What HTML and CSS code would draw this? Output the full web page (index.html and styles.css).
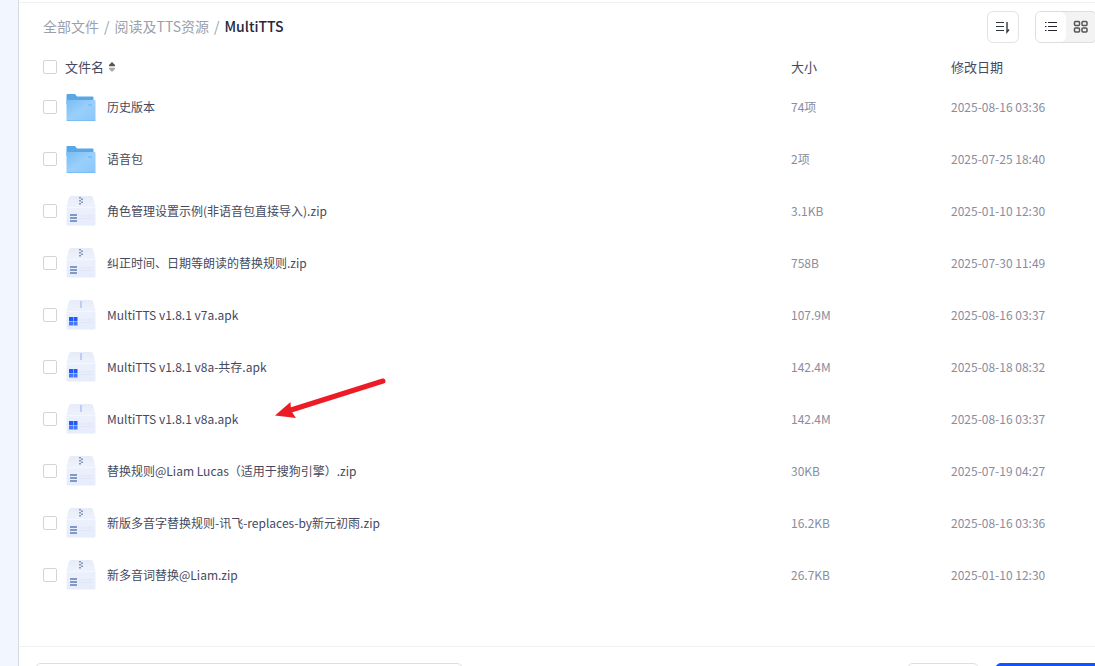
FILE: index.html
```html
<!DOCTYPE html>
<html lang="zh-CN">
<head>
    <meta charset="UTF-8">
    <meta name="viewport" content="width=device-width, initial-scale=1.0">
    <title>MultiTTS</title>
    <link rel="stylesheet" href="styles.css">
</head>
<body>
    <!-- Shared file icons -->
    <svg class="sprite" aria-hidden="true">
        <defs>
            <linearGradient id="folderFill" x1="0" y1="0" x2="1" y2="1">
                <stop offset="0" stop-color="#79bdf3"/>
                <stop offset="0.5" stop-color="#9acffb"/>
                <stop offset="1" stop-color="#8ac6fa"/>
            </linearGradient>
            <linearGradient id="boxFill" x1="0" y1="0" x2="0" y2="1">
                <stop offset="0" stop-color="#e7ebf7"/>
                <stop offset="0.3" stop-color="#edf1fb"/>
                <stop offset="1" stop-color="#e6ecfb"/>
            </linearGradient>
            <symbol id="folder" viewBox="0 0 30 30">
                <path d="M.5 3Q.5 2 1.500 2H9l2 2.500h15.500q1 0 1 1V12H.5z" fill="#5aa7e6"/>
                <path d="M1.500 8h27q1 0 1 1v19q0 1-1 1h-27q-1 0-1-1V9q0-1 1-1z" fill="url(#folderFill)"/>
                <path d="M.5 28h29q0 1-1 1h-27q-1 0-1-1z" fill="#79bdf3"/>
                <rect x="22" y="12" width="4" height="2" rx="1" fill="#7fbff3"/>
            </symbol>
            <symbol id="box" viewBox="0 0 30 30">
                <path d="M5 0h20q1.500 0 2 1.500L29.500 11v17q0 1.500-1.500 1.500H2Q.5 29.500.5 28V11L3 1.500Q3.500 0 5 0z" fill="url(#boxFill)"/>
                <path d="M.5 11.500h29" stroke="#f5f7fd"/>
                <path d="M13 20h14M13 22.500h14" stroke="#e0e6f5"/>
            </symbol>
            <symbol id="zip" viewBox="0 0 30 30">
                <use href="#box"/>
                <path d="M13 1h2v1.500h2V4h-2v1.500h2V7h-2v1.500h-2V7h2V5.500h-2V4h2V2.500h-2z" fill="#8795b8"/>
                <path d="M4 19h7M4 22h7M4 25h7" stroke="#8299c8" stroke-width="2"/>
            </symbol>
            <symbol id="apk" viewBox="0 0 30 30">
                <use href="#box"/>
                <path d="M14 1h2v7h-2z" fill="#b9cffb"/>
                <path d="M3 17h4v4H3zM7.500 17h4v4h-4z" fill="#1f59ff"/>
                <path d="M3 21.500h4v4H3zM7.500 21.500h4v4h-4z" fill="#4377ff"/>
            </symbol>
        </defs>
    </svg>

    <div class="app">
        <aside class="sidebar"></aside>
        <main class="panel">
            <header class="toolbar">
                <nav class="breadcrumb">
                    <a href="#">全部文件</a><span>/</span><a href="#">阅读及TTS资源</a><span>/</span><strong>MultiTTS</strong>
                </nav>
                <button type="button" class="tool-btn" aria-label="排序">
                    <svg width="16" height="16" viewBox="0 0 16 16" fill="none" stroke="#333740">
                        <path d="M1 3.500h8M1 7.500h8M1 11.500h8" stroke-width="1.200"/>
                        <path d="M12 3v10l2-2.500" stroke-width="1.400"/>
                    </svg>
                </button>
                <div class="view-switch">
                    <button type="button" class="active" aria-label="列表">
                        <svg width="16" height="16" viewBox="0 0 16 16" stroke="#25272e" stroke-width="1.200">
                            <path d="M2 3.500h1.500M5 3.500h9M2 7.500h1.500M5 7.500h9M2 11.500h1.500M5 11.500h9"/>
                        </svg>
                    </button>
                    <button type="button" aria-label="网格">
                        <svg width="16" height="16" viewBox="0 0 16 16" fill="none" stroke="#555" stroke-width="1.500">
                            <rect x="1.500" y="2.500" width="5" height="4" rx="1"/>
                            <rect x="9" y="2.500" width="5" height="4" rx="1"/>
                            <rect x="1.500" y="9" width="5" height="4" rx="1"/>
                            <rect x="9" y="9" width="5" height="4" rx="1"/>
                        </svg>
                    </button>
                </div>
            </header>

            <div class="list">
                <table class="files">
                    <thead>
                        <tr>
                            <th class="col-check"><input type="checkbox" aria-label="全选"></th>
                            <th>文件名<svg class="sort" width="8" height="10" viewBox="0 0 8 10"><path d="M4 0l3 3v1.200H1V3z" fill="#555"/><path d="M4 10L1 7V5.800h6V7z" fill="#aaa"/></svg></th>
                            <th class="col-size">大小</th>
                            <th class="col-date">修改日期</th>
                        </tr>
                    </thead>
                    <tbody>
                        <tr>
                            <td><input type="checkbox" id="f1"></td>
                            <td><label class="name" for="f1"><svg><use href="#folder"/></svg>历史版本</label></td>
                            <td>74项</td>
                            <td>2025-08-16 03:36</td>
                        </tr>
                        <tr>
                            <td><input type="checkbox" id="f2"></td>
                            <td><label class="name" for="f2"><svg><use href="#folder"/></svg>语音包</label></td>
                            <td>2项</td>
                            <td>2025-07-25 18:40</td>
                        </tr>
                        <tr>
                            <td><input type="checkbox" id="f3"></td>
                            <td><label class="name" for="f3"><svg><use href="#zip"/></svg>角色管理设置示例(非语音包直接导入).zip</label></td>
                            <td>3.1KB</td>
                            <td>2025-01-10 12:30</td>
                        </tr>
                        <tr>
                            <td><input type="checkbox" id="f4"></td>
                            <td><label class="name" for="f4"><svg><use href="#zip"/></svg>纠正时间、日期等朗读的替换规则.zip</label></td>
                            <td>758B</td>
                            <td>2025-07-30 11:49</td>
                        </tr>
                        <tr>
                            <td><input type="checkbox" id="f5"></td>
                            <td><label class="name" for="f5"><svg><use href="#apk"/></svg>MultiTTS v1.8.1 v7a.apk</label></td>
                            <td>107.9M</td>
                            <td>2025-08-16 03:37</td>
                        </tr>
                        <tr>
                            <td><input type="checkbox" id="f6"></td>
                            <td><label class="name" for="f6"><svg><use href="#apk"/></svg>MultiTTS v1.8.1 v8a-共存.apk</label></td>
                            <td>142.4M</td>
                            <td>2025-08-18 08:32</td>
                        </tr>
                        <tr>
                            <td><input type="checkbox" id="f7"></td>
                            <td><label class="name" for="f7"><svg><use href="#apk"/></svg>MultiTTS v1.8.1 v8a.apk</label></td>
                            <td>142.4M</td>
                            <td>2025-08-16 03:37</td>
                        </tr>
                        <tr>
                            <td><input type="checkbox" id="f8"></td>
                            <td><label class="name" for="f8"><svg><use href="#zip"/></svg>替换规则@Liam Lucas（适用于搜狗引擎）.zip</label></td>
                            <td>30KB</td>
                            <td>2025-07-19 04:27</td>
                        </tr>
                        <tr>
                            <td><input type="checkbox" id="f9"></td>
                            <td><label class="name" for="f9"><svg><use href="#zip"/></svg>新版多音字替换规则-讯飞-replaces-by新元初雨.zip</label></td>
                            <td>16.2KB</td>
                            <td>2025-08-16 03:36</td>
                        </tr>
                        <tr>
                            <td><input type="checkbox" id="f10"></td>
                            <td><label class="name" for="f10"><svg><use href="#zip"/></svg>新多音词替换@Liam.zip</label></td>
                            <td>26.7KB</td>
                            <td>2025-01-10 12:30</td>
                        </tr>
                    </tbody>
                </table>
                <svg class="pointer" width="112" height="42" viewBox="0 0 112 42">
                    <path d="M108 4L16 33" stroke="#ed1c24" stroke-width="5" stroke-linecap="round"/>
                    <path d="M0 38.500L15.500 25L16 33.500L21 41z" fill="#ed1c24"/>
                </svg>
            </div>

            <footer class="footer">
                <input type="text" class="path" aria-label="保存路径">
                <button type="button" class="cancel" aria-label="取消"></button>
                <button type="button" class="confirm" aria-label="确定"></button>
            </footer>
        </main>
    </div>
</body>
</html>
```

FILE: styles.css
```css
* {
    box-sizing: border-box;
}
body {
    margin: 0;
    font-family: "Noto Sans CJK SC", sans-serif;
    font-size: 12px;
    line-height: 20px;
    color: #454960;
    background-color: #fff;
    overflow: hidden;
}
button {
    padding: 0;
    cursor: pointer;
}
.sprite {
    position: absolute;
    width: 0;
    height: 0;
}
.app {
    display: flex;
    height: 100vh;
}
.sidebar {
    flex: none;
    width: 19px;
    background-color: #f1f6ff;
    border-right: 1px solid #d9dbe0;
}
.panel {
    display: flex;
    flex-direction: column;
    flex: 1;
    min-width: 0;
    padding-top: 2px;
}

/* Toolbar */
.toolbar {
    display: flex;
    align-items: center;
    padding: 8px 0 10px 24px;
    border-top: 1px solid #f1f1f3;
}
.breadcrumb {
    flex: 1;
    padding-bottom: 2px;
    font-size: 14px;
    color: #9c9fac;
}
.breadcrumb a {
    color: #9c9fac;
    text-decoration: none;
}
.breadcrumb span {
    margin: 0 5px;
}
.breadcrumb strong {
    font-weight: 500;
    color: #25283d;
}
.tool-btn {
    display: flex;
    align-items: center;
    justify-content: center;
    width: 32px;
    height: 32px;
    margin-right: 16px;
    border: 1px solid #e3e3e6;
    border-radius: 6px;
    background-color: #fff;
}
.view-switch {
    display: flex;
    height: 32px;
    margin-right: -2px;
    border: 1px solid #dedee1;
    border-radius: 6px;
    background-color: #f3f3f4;
    overflow: hidden;
}
.view-switch button {
    display: flex;
    align-items: center;
    justify-content: center;
    width: 30px;
    border: 0;
    background-color: transparent;
}
.view-switch .active {
    background-color: #fff;
    border-radius: 0 6px 6px 0;
}

/* File list */
.list {
    position: relative;
    flex: 1;
    padding-left: 24px;
}
.files {
    width: 100%;
    table-layout: fixed;
    border-collapse: collapse;
}
.files th {
    height: 28px;
    padding: 0;
    font-size: 13px;
    font-weight: 400;
    text-align: left;
}
.files td {
    height: 52px;
    padding: 0;
    color: #8a8d9e;
}
.files .col-check {
    width: 22px;
}
.files .col-size {
    width: 160px;
}
.files .col-date {
    width: 144px;
}
.files input {
    display: block;
    appearance: none;
    width: 14px;
    height: 14px;
    margin: 0;
    border: 1px solid #d3d4d8;
    border-radius: 2px;
    background-color: #fff;
}
.files input:checked {
    background-color: #1f59ff;
}
.sort {
    margin-left: 4px;
}
.name {
    display: flex;
    align-items: center;
    gap: 11px;
    padding-left: 1px;
    color: #454960;
}
.name svg {
    flex: none;
    width: 30px;
    height: 30px;
}
.pointer {
    position: absolute;
    left: 256px;
    top: 324px;
}

/* Footer */
.footer {
    display: flex;
    flex: none;
    height: 20px;
    padding: 16px 0 0 16px;
    border-top: 1px solid #f1f1f3;
}
.path,
.cancel,
.confirm {
    flex: none;
    height: 36px;
    border: 1px solid #dedee1;
    border-radius: 6px;
    background-color: #fff;
}
.path {
    width: 428px;
    margin-right: auto;
}
.cancel {
    width: 72px;
    margin-right: 16px;
}
.confirm {
    width: 112px;
    margin-right: -12px;
    border-color: #0f55ff;
    background-color: #0f55ff;
}
```
